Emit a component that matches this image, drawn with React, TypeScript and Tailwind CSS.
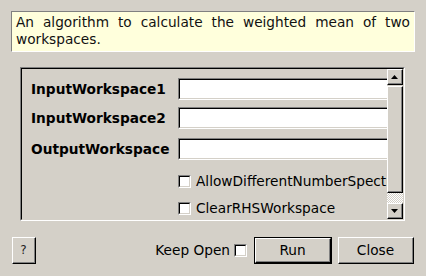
import React from 'react'

const face = '#d4d0c8'

function Raised({ className = '', children }: { className?: string; children?: React.ReactNode }) {
  return (
    <div className={`border-t border-l border-t-white border-l-white border-b border-r border-b-black border-r-black ${className}`}>
      <div className="flex h-full w-full items-center justify-center border-b border-r border-b-[#808080] border-r-[#808080]">
        {children}
      </div>
    </div>
  )
}

function Check() {
  return (
    <span className="block h-[13px] w-[13px] shrink-0 border-t border-l border-t-[#808080] border-l-[#808080] border-b border-r border-b-white border-r-white">
      <span className="block h-full w-full border-t border-l border-t-black border-l-black border-b border-r border-b-[#d4d0c8] border-r-[#d4d0c8] bg-white" />
    </span>
  )
}

function Field({ label, className = '' }: { label: string; className?: string }) {
  return (
    <div className={`flex h-[22px] items-center ${className}`}>
      <span className="w-[147px] shrink-0 font-bold">{label}</span>
      <div className="h-[22px] w-[240px] shrink-0 border-t border-l border-t-[#808080] border-l-[#808080] border-b border-b-white">
        <div className="h-full w-full border-t border-l border-t-black border-l-black border-b border-b-[#d4d0c8] bg-white" />
      </div>
    </div>
  )
}

function Arrow({ up }: { up?: boolean }) {
  return (
    <svg width="7" height="4" viewBox="0 0 7 4">
      <path d={up ? 'M0 4 L3.5 0 L7 4 Z' : 'M0 0 L3.5 4 L7 0 Z'} fill="#000" />
    </svg>
  )
}

export default function App() {
  return (
    <div
      className="flex h-[276px] w-[426px] flex-col overflow-hidden bg-[#d4d0c8] text-[13.7px] text-black font-['DejaVu_Sans',sans-serif]"
      style={{ backgroundColor: face }}
    >
      <div className="mx-[11px] mt-[11px] h-[41px] border-t border-l border-t-[#808080] border-l-[#808080] border-b border-r border-b-white border-r-white bg-[#ffffdc] px-[4px] pt-[2px] text-justify leading-[17px] text-[#111]">
        An algorithm to calculate the weighted mean of two workspaces.
      </div>

      <div className="ml-[20px] mt-[15px] flex h-[154px] w-[385px] border-t border-l border-t-[#808080] border-l-[#808080] border-b border-r border-b-white border-r-white">
        <div className="flex h-full w-full border-t border-l border-t-black border-l-black border-b border-r border-b-[#d4d0c8] border-r-[#d4d0c8]">
          <div className="flex-1 overflow-hidden pl-[9px] pt-[9px]">
            <Field label="InputWorkspace1" />
            <Field label="InputWorkspace2" className="mt-[7px]" />
            <Field label="OutputWorkspace" className="mt-[9px]" />
            <label className="ml-[147px] mt-[15px] flex h-[13px] items-center gap-[5px] whitespace-nowrap">
              <Check />
              <span>AllowDifferentNumberSpectra</span>
            </label>
            <label className="ml-[147px] mt-[14px] flex h-[13px] items-center gap-[5px] whitespace-nowrap">
              <Check />
              <span>ClearRHSWorkspace</span>
            </label>
          </div>
          <div className="flex w-[16px] shrink-0 flex-col">
            <Raised className="h-[16px]">
              <Arrow up />
            </Raised>
            <Raised className="mt-[1px] h-[107px]" />
            <div className="flex-1 bg-[repeating-conic-gradient(#ffffff_0_25%,#d4d0c8_0_50%)] bg-[length:2px_2px]" />
            <Raised className="h-[16px]">
              <Arrow />
            </Raised>
          </div>
        </div>
      </div>

      <div className="mx-[12px] mt-[16px] flex h-[27px] items-center">
        <Raised className="h-[27px] w-[24px]">
          <span className="text-[12px] text-[#222]">?</span>
        </Raised>
        <div className="flex-1" />
        <span className="mr-[4px]">Keep Open</span>
        <Check />
        <div className="ml-[7px] h-[27px] w-[78px] border border-black">
          <Raised className="h-full w-full">Run</Raised>
        </div>
        <Raised className="ml-[6px] h-[27px] w-[76px]">Close</Raised>
      </div>
    </div>
  )
}
